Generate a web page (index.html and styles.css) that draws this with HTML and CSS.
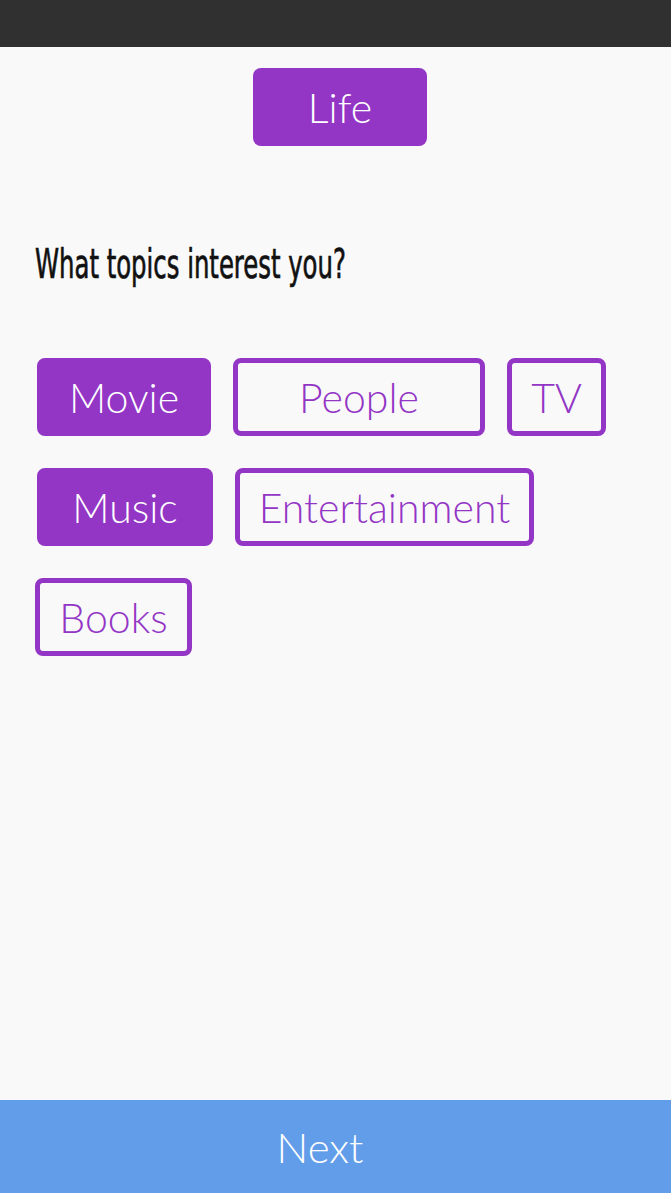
FILE: index.html
```html
<!DOCTYPE html>
<html lang="en">
<head>
<meta charset="utf-8">
<title>Topics</title>
<link rel="stylesheet" href="styles.css">
</head>
<body>
<div class="app">
  <div class="statusbar"></div>
  <main class="content">
    <div class="category">Life</div>
    <h1 class="question">What topics interest you?</h1>
    <div class="chips">
      <div class="chip chip--on chip--movie">Movie</div>
      <div class="chip chip--people">People</div>
      <div class="chip chip--tv">TV</div>
      <div class="chip chip--on chip--music">Music</div>
      <div class="chip chip--ent">Entertainment</div>
      <div class="chip chip--books">Books</div>
    </div>
  </main>
  <div class="next">Next</div>
</div>
</body>
</html>
```
FILE: styles.css
```css
html, body {
  margin: 0;
  padding: 0;
}
body {
  background: #f9f9f9;
  font-family: "Lato", "Open Sans", "DejaVu Sans", sans-serif;
}
.app {
  height: 1193px;
  display: flex;
  flex-direction: column;
}
.statusbar {
  height: 47px;
  background: #303030;
  flex: none;
}
.content {
  flex: 1;
  padding-top: 21px;
  display: flex;
  flex-direction: column;
}
.category {
  align-self: center;
  margin-left: 9px;
  width: 174px;
  height: 78px;
  border-radius: 8px;
  background: #9335c5;
  color: #fff;
  font-weight: 300;
  font-size: 41px;
  display: flex;
  align-items: center;
  justify-content: center;
  box-sizing: border-box;
}
.question {
  margin: 94px 0 0 35px;
  font-family: "DejaVu Sans Condensed", sans-serif;
  font-weight: normal;
  font-size: 41px;
  line-height: 48px;
  color: #111;
  -webkit-text-stroke: 0.7px #111;
  transform-origin: left center;
  transform: scaleX(0.66);
  white-space: nowrap;
}
.chips {
  margin-top: 70px;
  padding-left: 37px;
  display: flex;
  flex-wrap: wrap;
  column-gap: 22px;
  row-gap: 32px;
}
.chip {
  height: 78px;
  box-sizing: border-box;
  border: 5px solid #9335c5;
  border-radius: 8px;
  color: #9335c5;
  font-weight: 300;
  font-size: 41px;
  display: flex;
  align-items: center;
  justify-content: center;
  white-space: nowrap;
}
.chip--on {
  background: #9335c5;
  color: #fff;
}
.chip--movie { width: 174px; }
.chip--people { width: 252px; }
.chip--tv { width: 99px; }
.chip--music { width: 176px; }
.chip--ent { width: 299px; }
.chip--books { width: 157px; margin-left: -2px; }
.next {
  height: 93px;
  flex: none;
  background: #629dea;
  color: #fff;
  font-weight: 300;
  font-size: 42px;
  display: flex;
  align-items: center;
  justify-content: center;
  padding-right: 31px;
}
```
